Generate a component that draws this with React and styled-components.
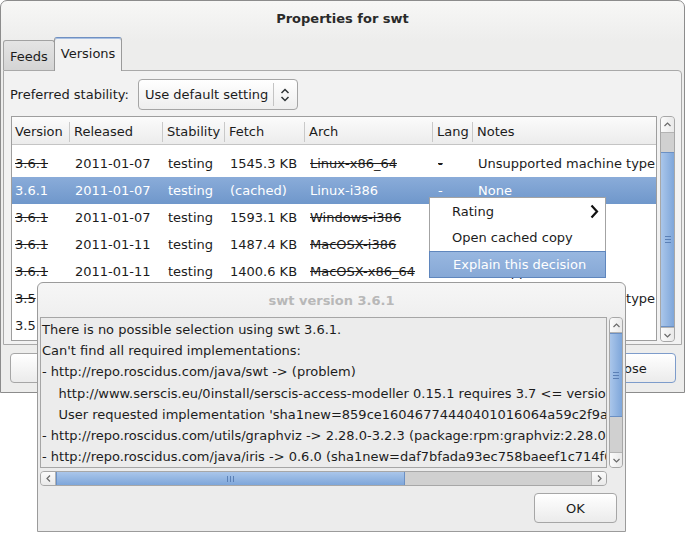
import React from 'react'
import styled, { createGlobalStyle, css } from 'styled-components'

const GlobalStyle = createGlobalStyle`
  html, body { margin: 0; padding: 0; background: #ffffff; }
  body {
    font-family: "DejaVu Sans", "Liberation Sans", sans-serif;
    font-size: 13px;
    color: #1c1c1c;
  }
  * { box-sizing: border-box; }
`

const COLS = '57px 93px 62px 80px 128px 40px 184px'

const columns = ['Version', 'Released', 'Stability', 'Fetch', 'Arch', 'Lang', 'Notes']

const versions = [
  { v: '3.6.1', date: '2011-01-07', stab: 'testing', fetch: '1545.3 KB', arch: 'Linux-x86_64', lang: '-', notes: 'Unsupported machine type', bad: true },
  { v: '3.6.1', date: '2011-01-07', stab: 'testing', fetch: '(cached)', arch: 'Linux-i386', lang: '-', notes: 'None', selected: true },
  { v: '3.6.1', date: '2011-01-07', stab: 'testing', fetch: '1593.1 KB', arch: 'Windows-i386', lang: '-', notes: 'Unsupported OS', bad: true },
  { v: '3.6.1', date: '2011-01-11', stab: 'testing', fetch: '1487.4 KB', arch: 'MacOSX-i386', lang: '-', notes: 'Unsupported OS', bad: true },
  { v: '3.6.1', date: '2011-01-11', stab: 'testing', fetch: '1400.6 KB', arch: 'MacOSX-x86_64', lang: '-', notes: 'Unsupported OS', bad: true },
  { v: '3.5', date: '2009-06-26', stab: 'stable', fetch: '1502.0 KB', arch: 'Linux-x86_64', lang: '-', notes: 'Unsupported machine type', bad: true },
  { v: '3.5', date: '2009-06-26', stab: 'stable', fetch: '1488.2 KB', arch: 'Linux-i386', lang: '-', notes: 'None' },
]

const explainLines = [
  'There is no possible selection using swt 3.6.1.',
  "Can't find all required implementations:",
  '- http://repo.roscidus.com/java/swt -> (problem)',
  '    http://www.serscis.eu/0install/serscis-access-modeller 0.15.1 requires 3.7 <= version',
  "    User requested implementation 'sha1new=859ce16046774440401016064a59c2f9a4bc1b7b'",
  '- http://repo.roscidus.com/utils/graphviz -> 2.28.0-3.2.3 (package:rpm:graphviz:2.28.0-3.2.3:x86_64)',
  '- http://repo.roscidus.com/java/iris -> 0.6.0 (sha1new=daf7bfada93ec758baeef1c714f0e2d1)',
]

const Stage = styled.div`
  position: relative;
  width: 685px;
  height: 533px;
  overflow: hidden;
`

const Window = styled.div`
  width: 685px;
  height: 393px;
  border: 1px solid #8c8c8c;
  border-radius: 7px 7px 0 0;
  background: linear-gradient(#f7f7f6 0, #ededec 40px, #ededec 100%);
  display: flex;
  flex-direction: column;
`

const TitleBar = styled.div`
  height: ${p => p.$h}px;
  flex: none;
  display: flex;
  align-items: center;
  justify-content: center;
  font-weight: bold;
  color: ${p => (p.$inactive ? '#b8b8b8' : '#2a2a2a')};
`

const TabStrip = styled.div`
  height: 34px;
  display: flex;
  align-items: flex-end;
  padding-left: 2px;
`

const Tab = styled.div`
  height: 30px;
  padding: 1px 6px 0 6px;
  display: flex;
  align-items: center;
  border: 1px solid #a2a2a2;
  border-bottom: none;
  border-radius: 3px 3px 0 0;
  background: linear-gradient(#e4e4e4, #d4d4d4);
  ${p => p.$active && css`
    height: 34px;
    padding-top: 0;
    padding-bottom: 2px;
    margin-left: -1px;
    margin-bottom: -1px;
    position: relative;
    z-index: 1;
    border-color: #9a9a9a;
    border-top-color: #6f90c2;
    box-shadow: inset 0 1px 0 #a9c0e2;
    background: #f2f2f2;
  `}
`

const Page = styled.div`
  margin: 0 2px;
  height: 275px;
  flex: none;
  border: 1px solid #a9a9a9;
  border-radius: 0 4px 0 0;
  background: #f2f2f2;
  padding: 8px 5px 0 6px;
  display: flex;
  flex-direction: column;
  gap: 6px;
`

const StabilityRow = styled.div`
  display: flex;
  align-items: center;
  gap: 9px;
  height: 31px;
`

const Combo = styled.div`
  height: 31px;
  width: 160px;
  display: flex;
  align-items: stretch;
  border: 1px solid #a5a5a5;
  border-radius: 4px;
  background: linear-gradient(#ffffff, #eeeeee);
`

const ComboText = styled.div`
  flex: 1;
  display: flex;
  align-items: center;
  padding-left: 6px;
  white-space: nowrap;
  overflow: hidden;
`

const ComboArrow = styled.div`
  width: 24px;
  display: flex;
  align-items: center;
  justify-content: center;
  margin: 3px 0;
  border-left: 1px solid #c4c4c4;
`

const ListArea = styled.div`
  display: flex;
  gap: 3px;
  height: 226px;
  padding-left: 1px;
`

const ListFrame = styled.div`
  width: 646px;
  height: 225px;
  border: 1px solid #9e9e9e;
  background: #ffffff;
  overflow: hidden;
`

const HeaderRow = styled.div`
  display: grid;
  grid-template-columns: ${COLS};
  height: 28px;
  padding-top: 1px;
  background: linear-gradient(#fbfbfb, #ececec);
  border-bottom: 1px solid #c4c4c4;
`

const HeaderCell = styled.div`
  position: relative;
  display: flex;
  align-items: center;
  padding-left: 5px;
  white-space: nowrap;
  &:first-child { padding-left: 3px; }
  & + &::before {
    content: '';
    position: absolute;
    left: 0;
    top: 4px;
    bottom: 2px;
    width: 1px;
    background: #c9c9c9;
  }
`

const ListBody = styled.div`
  padding-top: 5px;
`

const Row = styled.div`
  display: grid;
  grid-template-columns: ${COLS};
  height: 27px;
  align-items: center;
  ${p => p.$selected && css`
    background: linear-gradient(#8aacd9, #6f97cb);
    color: #ffffff;
  `}
`

const Cell = styled.span`
  padding-left: 6px;
  white-space: nowrap;
  overflow: hidden;
  &:first-child { padding-left: 3px; }
  ${p => p.$struck && css`text-decoration: line-through;`}
`

const ButtonRow = styled.div`
  margin-top: 8px;
  padding: 0 8px 0 9px;
  display: flex;
  justify-content: space-between;
`

const Button = styled.button`
  height: 30px;
  width: ${p => p.$w}px;
  font: inherit;
  color: #1c1c1c;
  border: 1px solid ${p => (p.$default ? '#7d9ccb' : '#a6a6a6')};
  border-radius: 4px;
  background: linear-gradient(#ffffff, #ebebeb);
  padding: 0;
`

const Menu = styled.div`
  position: absolute;
  left: 429px;
  top: 197px;
  width: 177px;
  height: 81px;
  border: 1px solid #a3a3a3;
  background: #ffffff;
  z-index: 3;
`

const MenuItem = styled.div`
  height: 26px;
  display: flex;
  align-items: center;
  justify-content: space-between;
  padding: 0 6px 0 22px;
  & + & { height: 27px; }
  ${p => p.$active && css`
    && { height: 27px; }
    margin: 0 -1px;
    padding-left: 23px;
    color: #ffffff;
    border: 1px solid #5f86bd;
    background: linear-gradient(#98b7e0, #86a8d6);
  `}
`

const Dialog = styled.div`
  position: absolute;
  left: 37px;
  top: 282px;
  width: 589px;
  height: 250px;
  border: 1px solid #9b9b9b;
  border-radius: 6px 6px 0 0;
  background: linear-gradient(#f6f6f6 0, #efefef 34px, #ececec 35px, #ececec 100%);
  display: flex;
  flex-direction: column;
  z-index: 4;
`

const Scrolled = styled.div`
  display: grid;
  grid-template-columns: 567px 14px;
  grid-template-rows: 151px 15px;
  column-gap: 2px;
  row-gap: 3px;
  padding-left: 2px;
`

const TextView = styled.div`
  border: 1px solid #a6a6a6;
  background: #ececec;
  overflow: hidden;
  padding: 1px 0 0 1px;
  line-height: 21.2px;
  white-space: pre;
`

const DialogFooter = styled.div`
  margin-top: 7px;
  padding-right: 8px;
  display: flex;
  justify-content: flex-end;
`

const Track = styled.div`
  display: flex;
  flex-direction: ${p => (p.$vertical ? 'column' : 'row')};
  ${p => (p.$vertical ? css`width: ${p.$thick}px;` : css`height: ${p.$thick}px;`)}
  border: 1px solid #a7a7a7;
  border-radius: 4px;
  background: #d0d0d0;
  overflow: hidden;
`

const Stepper = styled.div`
  flex: none;
  ${p => (p.$vertical ? css`height: ${p.$size}px;` : css`width: ${p.$size}px;`)}
  display: flex;
  align-items: center;
  justify-content: center;
  background: linear-gradient(${p => (p.$vertical ? '90deg' : '180deg')}, #fbfbfb, #e9e9e9);
  ${p => (p.$vertical
    ? css`border-${p.$end ? 'top' : 'bottom'}: 1px solid #b3b3b3;`
    : css`border-${p.$end ? 'left' : 'right'}: 1px solid #b3b3b3;`)}
`

const Trough = styled.div`
  flex: 1;
  display: flex;
  flex-direction: ${p => (p.$vertical ? 'column' : 'row')};
  padding-${p => (p.$vertical ? 'top' : 'left')}: ${p => p.$offset}px;
`

const Thumb = styled.div`
  flex: none;
  ${p => (p.$vertical ? css`height: ${p.$size}px;` : css`width: ${p.$size}px;`)}
  display: flex;
  align-items: center;
  justify-content: center;
  gap: 2px;
  flex-direction: ${p => (p.$vertical ? 'column' : 'row')};
  background: linear-gradient(${p => (p.$vertical ? '90deg' : '180deg')}, #aac6ea, #7ea6da);
  ${p => (p.$vertical
    ? css`border-top: 1px solid #6b90c4; border-bottom: 1px solid #6b90c4;`
    : css`border-left: 1px solid #6b90c4; border-right: 1px solid #6b90c4;`)}
`

const Grip = styled.span`
  display: block;
  background: #5b80b6;
  ${p => (p.$vertical ? css`width: 6px; height: 1px;` : css`width: 1px; height: 6px;`)}
`

function Arrow({ dir }) {
  const d = {
    up: 'M1.5 5 L4.5 2 L7.5 5',
    down: 'M1.5 2 L4.5 5 L7.5 2',
    left: 'M5 1.5 L2 4.5 L5 7.5',
    right: 'M2 1.5 L5 4.5 L2 7.5',
  }[dir]
  const vertical = dir === 'up' || dir === 'down'
  return (
    <svg width={vertical ? 9 : 7} height={vertical ? 7 : 9} viewBox={vertical ? '0 0 9 7' : '0 0 7 9'}>
      <path d={d} fill="none" stroke="#6a6a6a" strokeWidth="1.2" />
    </svg>
  )
}

function ScrollBar({ vertical, thick, step, offset, size }) {
  return (
    <Track $vertical={vertical} $thick={thick}>
      <Stepper $vertical={vertical} $size={step}>
        <Arrow dir={vertical ? 'up' : 'left'} />
      </Stepper>
      <Trough $vertical={vertical} $offset={offset}>
        <Thumb $vertical={vertical} $size={size}>
          <Grip $vertical={vertical} />
          <Grip $vertical={vertical} />
          <Grip $vertical={vertical} />
        </Thumb>
      </Trough>
      <Stepper $vertical={vertical} $size={step} $end>
        <Arrow dir={vertical ? 'down' : 'right'} />
      </Stepper>
    </Track>
  )
}

function UpDown() {
  return (
    <svg width="10" height="16" viewBox="0 0 10 16">
      <path d="M1.5 6 L5 2.5 L8.5 6 M1.5 10 L5 13.5 L8.5 10" fill="none" stroke="#2e3436" strokeWidth="1.5" />
    </svg>
  )
}

function SubmenuArrow() {
  return (
    <svg width="10" height="15" viewBox="0 0 10 15">
      <path d="M2.5 1.5 L8 7.5 L2.5 13.5" fill="none" stroke="#111" strokeWidth="2.2" />
    </svg>
  )
}

export default function App() {
  return (
    <>
      <GlobalStyle />
      <Stage>
        <Window>
          <TitleBar $h={35}>Properties for swt</TitleBar>
          <TabStrip>
            <Tab>Feeds</Tab>
            <Tab $active>Versions</Tab>
          </TabStrip>
          <Page>
            <StabilityRow>
              <span>Preferred stability:</span>
              <Combo>
                <ComboText>Use default setting</ComboText>
                <ComboArrow><UpDown /></ComboArrow>
              </Combo>
            </StabilityRow>
            <ListArea>
              <ListFrame>
                <HeaderRow>
                  {columns.map(c => <HeaderCell key={c}>{c}</HeaderCell>)}
                </HeaderRow>
                <ListBody>
                  {versions.map((r, i) => (
                    <Row key={i} $selected={r.selected}>
                      <Cell $struck={r.bad}>{r.v}</Cell>
                      <Cell>{r.date}</Cell>
                      <Cell>{r.stab}</Cell>
                      <Cell>{r.fetch}</Cell>
                      <Cell $struck={r.bad}>{r.arch}</Cell>
                      <Cell $struck={r.bad}>{r.lang}</Cell>
                      <Cell>{r.notes}</Cell>
                    </Row>
                  ))}
                </ListBody>
              </ListFrame>
              <ScrollBar vertical thick={15} step={16} offset={19} size={175} />
            </ListArea>
          </Page>
          <ButtonRow>
            <Button $w={86}>Help</Button>
            <Button $w={94} $default>Close</Button>
          </ButtonRow>
        </Window>

        <Menu>
          <MenuItem>Rating<SubmenuArrow /></MenuItem>
          <MenuItem>Open cached copy</MenuItem>
          <MenuItem $active>Explain this decision</MenuItem>
        </Menu>

        <Dialog>
          <TitleBar $h={34} $inactive>swt version 3.6.1</TitleBar>
          <Scrolled>
            <TextView>{explainLines.join('\n')}</TextView>
            <ScrollBar vertical thick={14} step={15} offset={0} size={84} />
            <ScrollBar thick={15} step={15} offset={0} size={349} />
          </Scrolled>
          <DialogFooter>
            <Button $w={83}>OK</Button>
          </DialogFooter>
        </Dialog>
      </Stage>
    </>
  )
}
